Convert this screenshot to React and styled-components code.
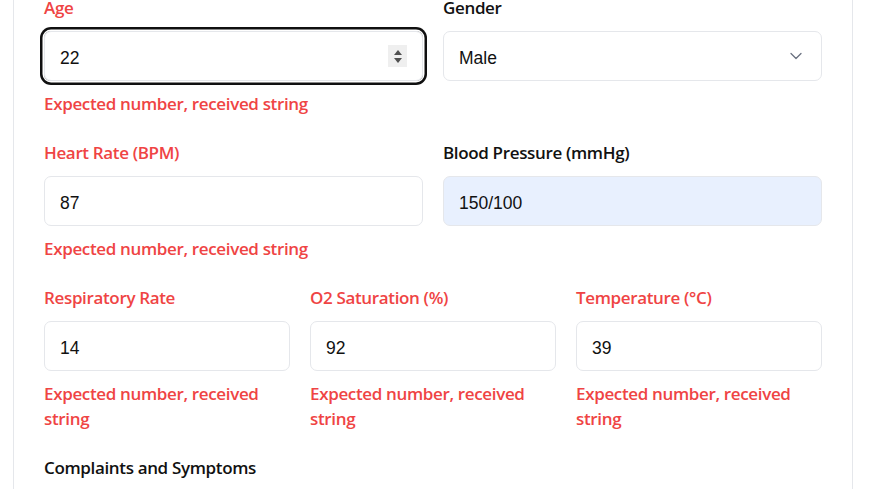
import styled, { createGlobalStyle } from "styled-components";

const GlobalStyle = createGlobalStyle`
  html, body {
    margin: 0;
    padding: 0;
    background: #fff;
    overflow: hidden;
  }
  body {
    font-family: "Open Sans", "Noto Sans", sans-serif;
  }
`;

const fields = [
  [
    { label: "Age", value: "22", error: true, focused: true, number: true },
    { label: "Gender", value: "Male", select: true },
  ],
  [
    { label: "Heart Rate (BPM)", value: "87", error: true },
    { label: "Blood Pressure (mmHg)", value: "150/100", filled: true },
  ],
  [
    { label: "Respiratory Rate", value: "14", error: true },
    { label: "O2 Saturation (%)", value: "92", error: true },
    { label: "Temperature (°C)", value: "39", error: true },
  ],
];

function Chevron() {
  return (
    <svg width="14" height="14" viewBox="0 0 14 14" fill="none">
      <polyline
        points="2,4.5 7,9.5 12,4.5"
        stroke="#6b7280"
        strokeWidth="1.3"
        strokeLinecap="round"
        strokeLinejoin="round"
      />
    </svg>
  );
}

function Field({ field }) {
  return (
    <FieldBox>
      <Label $error={field.error}>{field.label}</Label>
      <InputWrap $focused={field.focused}>
        <Input readOnly value={field.value} $filled={field.filled} />
        {field.number && (
          <Spinner>
            <Arrow $up />
            <Arrow />
          </Spinner>
        )}
        {field.select && (
          <SelectIcon>
            <Chevron />
          </SelectIcon>
        )}
      </InputWrap>
      {field.error && <ErrorText>Expected number, received string</ErrorText>}
    </FieldBox>
  );
}

export default function App() {
  return (
    <>
      <GlobalStyle />
      <Card>
        {fields.map((row, i) => (
          <Row key={i} $cols={row.length}>
            {row.map((f) => (
              <Field key={f.label} field={f} />
            ))}
          </Row>
        ))}
        <Label>Complaints and Symptoms</Label>
      </Card>
    </>
  );
}

const Card = styled.div`
  width: 840px;
  box-sizing: border-box;
  margin: -31px 0 0 13px;
  padding: 26px 30px 40px;
  border: 1px solid #e5e7eb;
  border-radius: 8px;
  display: flex;
  flex-direction: column;
  gap: 25px;
`;

const Row = styled.div`
  display: grid;
  grid-template-columns: repeat(${(p) => p.$cols}, 1fr);
  column-gap: 20px;
`;

const FieldBox = styled.div`
  display: flex;
  flex-direction: column;
`;

const Label = styled.div`
  font-size: 17px;
  line-height: 24px;
  margin-bottom: 1px;
  font-weight: 600;
  letter-spacing: -0.35px;
  color: ${(p) => (p.$error ? "#ef4444" : "#111111")};
`;

const InputWrap = styled.div`
  position: relative;
  margin-top: 10px;
  height: 50px;
  border-radius: 7px;
  box-shadow: ${(p) =>
    p.$focused ? "0 0 0 1.5px #fff, 0 0 0 4px #101010" : "none"};
`;

const Input = styled.input`
  box-sizing: border-box;
  width: 100%;
  height: 50px;
  border: 1px solid #e5e7eb;
  border-radius: 7px;
  padding: 4px 15px 0;
  font-family: "Liberation Sans", Arial, sans-serif;
  font-size: 17.5px;
  color: #111;
  background: ${(p) => (p.$filled ? "#e8f0fe" : "#fff")};
  outline: none;
`;

const Spinner = styled.div`
  position: absolute;
  right: 16px;
  top: 14px;
  width: 19px;
  height: 22px;
  background: #efefef;
  display: flex;
  flex-direction: column;
  align-items: center;
  justify-content: center;
  gap: 3px;
`;

const Arrow = styled.span`
  width: 0;
  height: 0;
  border-left: 4.5px solid transparent;
  border-right: 4.5px solid transparent;
  ${(p) =>
    p.$up
      ? "border-bottom: 5px solid #505050;"
      : "border-top: 5px solid #505050;"}
`;

const SelectIcon = styled.div`
  position: absolute;
  right: 19px;
  top: 18px;
  display: flex;
`;

const ErrorText = styled.div`
  margin-top: 10px;
  font-size: 17px;
  line-height: 25px;
  font-weight: 600;
  letter-spacing: -0.35px;
  color: #ef4444;
`;
